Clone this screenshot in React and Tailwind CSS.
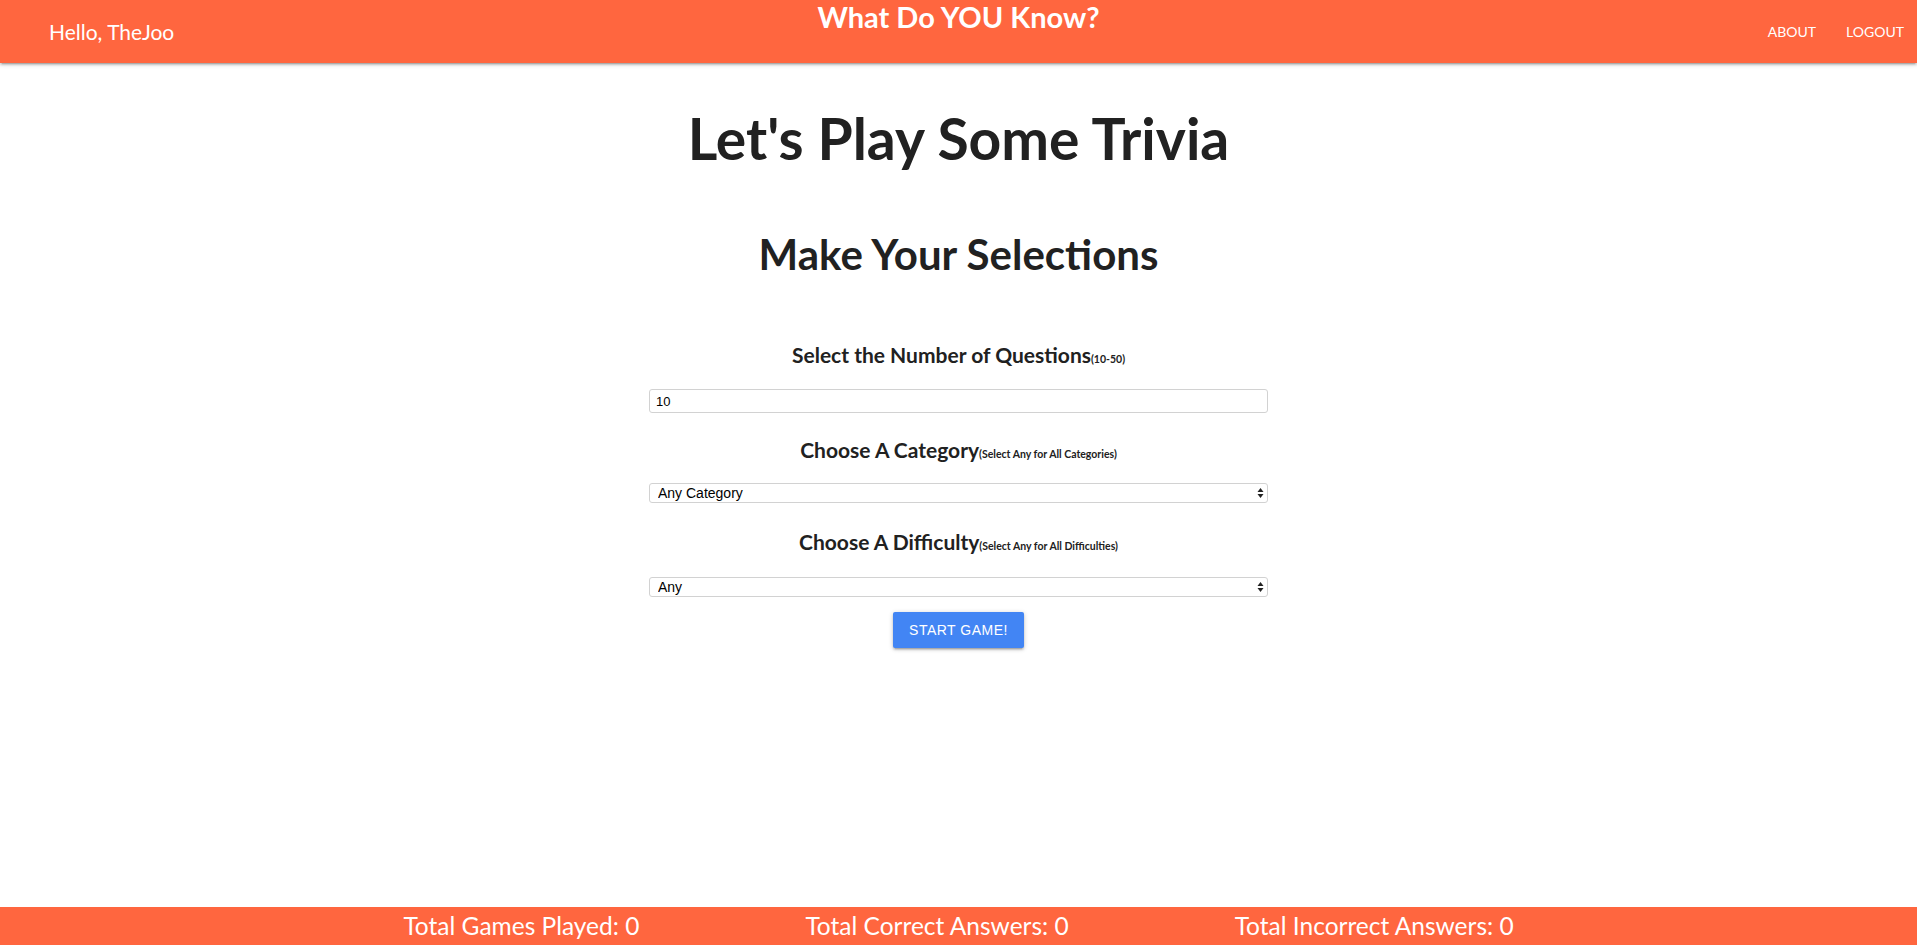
import { useState } from 'react';

const LATO = { fontFamily: 'Lato, "Open Sans", sans-serif' };

function Arrows() {
  return (
    <svg width="7" height="11" viewBox="0 0 7 11" className="pointer-events-none absolute right-[4px] top-1/2 -translate-y-1/2">
      <path d="M3.5 0.5 L6.5 4.5 L0.5 4.5 Z" fill="#222" />
      <path d="M3.5 10.5 L6.5 6.5 L0.5 6.5 Z" fill="#222" />
    </svg>
  );
}

function Heading({ title, hint }) {
  return (
    <h5 className="text-[21px] font-bold leading-[24px] text-[#212121]">
      {title}
      <span className="text-[10.5px] font-bold">{hint}</span>
    </h5>
  );
}

function FakeSelect({ value, options, onChange }) {
  return (
    <div className="relative">
      <select
        value={value}
        onChange={(e) => onChange(e.target.value)}
        className="block h-[20px] w-full appearance-none rounded-[3px] border border-[#d2d2d2] bg-white pl-[8px] text-[14px] leading-[18px] text-black outline-none"
        style={{ fontFamily: '"Liberation Sans", Arial, sans-serif' }}
      >
        {options.map((o) => (
          <option key={o}>{o}</option>
        ))}
      </select>
      <Arrows />
    </div>
  );
}

export default function App() {
  const [count, setCount] = useState('10');
  const [category, setCategory] = useState('Any Category');
  const [difficulty, setDifficulty] = useState('Any');

  return (
    <div className="flex min-h-screen flex-col bg-white" style={LATO}>
      <nav className="relative z-10 grid h-[63px] grid-cols-3 bg-[#ff663f] text-white shadow-[0_2px_2px_0_rgba(0,0,0,0.14),0_3px_1px_-2px_rgba(0,0,0,0.12),0_1px_5px_0_rgba(0,0,0,0.2)]">
        <div className="flex items-center pl-[49px] text-[21px]">Hello, TheJoo</div>
        <div className="flex justify-center">
          <a href="#" className="mt-[-3px] text-[29px] font-bold leading-[40px]">What Do YOU Know?</a>
        </div>
        <ul className="flex items-center justify-end pr-[13px] text-[14px]">
          <li><a href="#" className="px-[15px]">ABOUT</a></li>
          <li><a href="#" className="pl-[15px]">LOGOUT</a></li>
        </ul>
      </nav>

      <main className="flex flex-col items-center text-center text-[#212121]">
        <h2 className="mt-[44px] text-[57px] font-bold leading-[62px]">Let's Play Some Trivia</h2>
        <h3 className="mt-[60px] text-[42px] font-bold leading-[50px]">Make Your Selections</h3>

        <form className="mt-[64px] flex w-[619px] flex-col items-center" onSubmit={(e) => e.preventDefault()}>
          <Heading title="Select the Number of Questions" hint="(10-50)" />
          <input
            value={count}
            onChange={(e) => setCount(e.target.value)}
            className="mt-[18px] block h-[24px] w-full rounded-[3px] border border-[#d2d2d2] px-[6px] text-[13px] text-black outline-none"
            style={{ fontFamily: '"Liberation Sans", Arial, sans-serif' }}
          />

          <div className="mt-[25px] w-full">
            <Heading title="Choose A Category" hint="(Select Any for All Categories)" />
          </div>
          <div className="mt-[17px] w-full">
            <FakeSelect value={category} onChange={setCategory} options={['Any Category', 'General Knowledge', 'Books', 'Film', 'Music']} />
          </div>

          <div className="mt-[27px] w-full">
            <Heading title="Choose A Difficulty" hint="(Select Any for All Difficulties)" />
          </div>
          <div className="mt-[19px] w-full">
            <FakeSelect value={difficulty} onChange={setDifficulty} options={['Any', 'Easy', 'Medium', 'Hard']} />
          </div>

          <button
            type="submit"
            className="mt-[15px] h-[36px] rounded-[2px] bg-[#4285f4] px-[16px] text-[14px] uppercase tracking-[0.5px] text-white shadow-[0_2px_2px_0_rgba(0,0,0,0.14),0_3px_1px_-2px_rgba(0,0,0,0.12),0_1px_5px_0_rgba(0,0,0,0.2)]"
            style={{ fontFamily: '"Liberation Sans", Arial, sans-serif' }}
          >
            Start Game!
          </button>
        </form>
      </main>

      <footer className="mt-auto flex h-[38px] items-center justify-center gap-[166px] bg-[#ff663f] text-[24.5px] text-white">
        <span>Total Games Played: 0</span>
        <span>Total Correct Answers: 0</span>
        <span>Total Incorrect Answers: 0</span>
      </footer>
    </div>
  );
}
